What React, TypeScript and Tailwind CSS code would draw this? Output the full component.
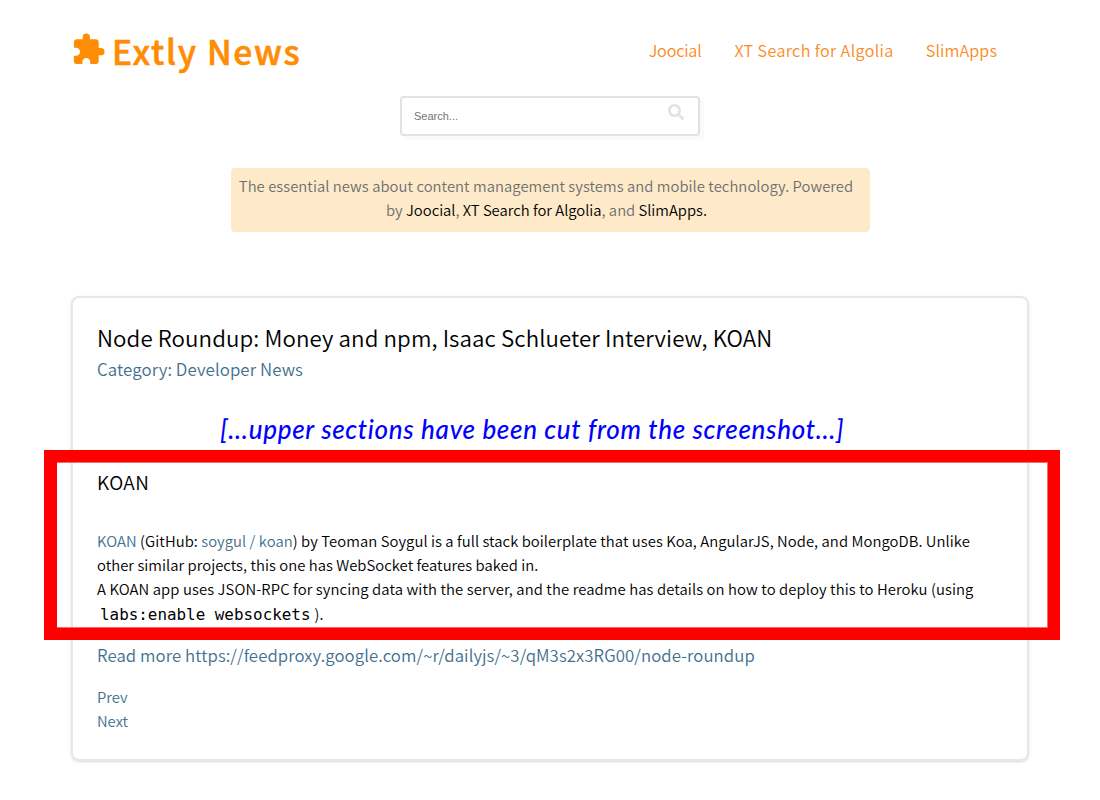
import { FaSearch } from "react-icons/fa";
import { MdExtension } from "react-icons/md";

const body = "font-['Noto_Sans_CJK_JP','Noto_Sans',sans-serif] font-[350]";

export default function App() {
  return (
    <div className={`relative h-[800px] w-[1100px] overflow-hidden bg-white text-black ${body}`}>
      <header className="flex h-24 items-start justify-between pl-[71px] pr-[103px]">
        <a className="flex items-start text-[#ff8c05]">
          <MdExtension className="mt-8 h-[35px] w-[35px]" />
          <span className="ml-[6px] mt-[26px] whitespace-nowrap text-[33.6px] font-medium leading-[50px] tracking-[1.7px] [-webkit-text-stroke:0.6px_#ff8c05]">Extly News</span>
        </a>
        <nav className="flex whitespace-nowrap pt-[38px] text-[16.2px] leading-6 text-[#fb8b24]">
          <a className="tracking-[-0.2px]">Joocial</a>
          <a className="ml-[33px] tracking-[0.35px]">XT Search for Algolia</a>
          <a className="ml-8 tracking-[0.1px]">SlimApps</a>
        </nav>
      </header>

      <form className="mx-auto flex h-10 w-[300px] items-center justify-between rounded border-2 border-[#e2e2e2] pl-3 pr-[14px] shadow-[4px_4px_0_#fafafa]">
        <span className="font-['Liberation_Sans',Arial,sans-serif] text-[11px] font-normal text-[#757575]">Search...</span>
        <FaSearch className="-mt-2 h-4 w-4 text-[#e2e2e2]" />
      </form>

      <section className="ml-[231px] mt-8 flex h-16 w-[639px] flex-col items-center rounded bg-[#feeac9] pt-[6px] text-[14.8px] leading-6 text-[#6b6f70]">
        <span className="-ml-[9px] whitespace-nowrap tracking-[0.06px]">The essential news about content management systems and mobile technology. Powered</span>
        <span className="-ml-2 whitespace-nowrap">
          by <a className="text-black">Joocial</a>, <a className="text-black">XT Search for Algolia</a>, and <a className="text-black">SlimApps.</a>
        </span>
      </section>

      <article className="ml-[71px] mt-16 flex h-[465px] w-[958px] flex-col items-start whitespace-nowrap rounded-lg border-2 border-[#e2e8f0] pl-6 shadow-[0_1px_3px_rgba(0,0,0,0.1),0_1px_2px_rgba(0,0,0,0.06)]">
        <h1 className="mt-[23px] text-[22.3px] leading-8 tracking-[0.085px]">Node Roundup: Money and npm, Isaac Schlueter Interview, KOAN</h1>
        <p className="mt-1 text-[16.85px] leading-6 tracking-[0.09px] text-[#42708f]">Category: Developer News</p>
        <p className="ml-[123px] mt-[32px] font-[Lato,sans-serif] text-[26px] font-medium italic leading-[32px] tracking-[0.68px] text-[#0000ff]">[...upper sections have been cut from the screenshot...]</p>
        <h2 className="mt-[23px] text-[19px] leading-7 tracking-[0.4px]">KOAN</h2>
        <div className="mt-[33px] flex flex-col items-start text-[14.83px] leading-6">
          <span className="tracking-[0.06px]"><a className="text-[#42708f]">KOAN</a> (GitHub: <a className="text-[#42708f]">soygul / koan</a>) by Teoman Soygul is a full stack boilerplate that uses Koa, AngularJS, Node, and MongoDB. Unlike</span>
          <span className="tracking-[0.04px]">other similar projects, this one has WebSocket features baked in.</span>
          <span className="tracking-[0.1px]">A KOAN app uses JSON-RPC for syncing data with the server, and the readme has details on how to deploy this to Heroku (using</span>
          <span className="pt-px"><code className="ml-[3px] mr-1 font-['DejaVu_Sans_Mono',monospace] text-[15.9px]">labs:enable websockets</code>).</span>
        </div>
        <a className="mt-4 text-[16.75px] leading-6 tracking-[0.09px] text-[#42708f]">Read more https://feedproxy.google.com/~r/dailyjs/~3/qM3s2x3RG00/node-roundup</a>
        <a className="mt-[18px] text-[14.8px] leading-6 text-[#42708f]">Prev</a>
        <a className="text-[14.8px] leading-6 text-[#42708f]">Next</a>
      </article>

      <div className="absolute left-[44px] top-[450px] h-[190px] w-[1016px] border-12 border-l-13 border-[#ff0000] shadow-[inset_-1px_0_0_#ff6666,inset_0_1px_0_#ff6666,inset_0_-1px_0_#ff6666]" />
    </div>
  );
}
